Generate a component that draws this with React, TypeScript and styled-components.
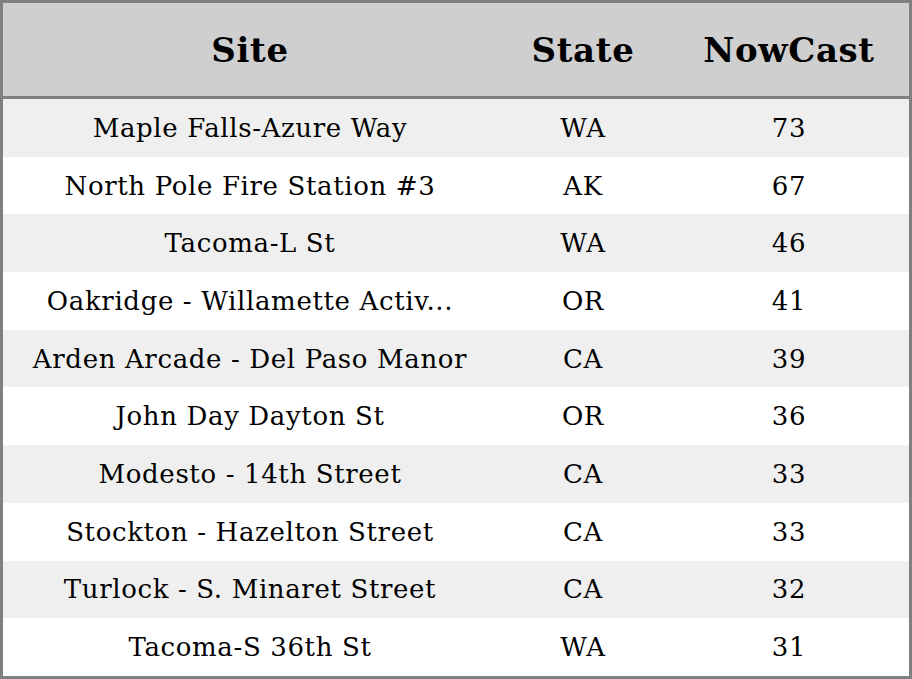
import React from 'react'
import styled, { createGlobalStyle } from 'styled-components'

const GlobalStyle = createGlobalStyle`
  html, body {
    margin: 0;
    padding: 0;
    background: #ffffff;
  }
`

const Table = styled.table`
  width: 912px;
  height: 679px;
  border: 3px solid #808080;
  border-spacing: 0;
  box-sizing: border-box;
  table-layout: fixed;
  font-family: "DejaVu Serif", serif;
  letter-spacing: 0.04em;
  color: #000;
`

const HeadCell = styled.th<{ $width: number }>`
  width: ${(p) => p.$width}px;
  height: 93px;
  padding: 0;
  background: #cfcfcf;
  border-bottom: 3px solid #808080;
  font-size: 34px;
  font-weight: bold;
  text-align: center;
  vertical-align: middle;
`

const Row = styled.tr<{ $striped: boolean }>`
  background: ${(p) => (p.$striped ? '#efefef' : '#ffffff')};
`

const Cell = styled.td`
  height: 57.7px;
  padding: 0;
  font-size: 26px;
  text-align: center;
  vertical-align: middle;
  white-space: nowrap;
`

const sites = [
  { site: 'Maple Falls-Azure Way', state: 'WA', nowcast: 73 },
  { site: 'North Pole Fire Station #3', state: 'AK', nowcast: 67 },
  { site: 'Tacoma-L St', state: 'WA', nowcast: 46 },
  { site: 'Oakridge - Willamette Activ...', state: 'OR', nowcast: 41 },
  { site: 'Arden Arcade - Del Paso Manor', state: 'CA', nowcast: 39 },
  { site: 'John Day Dayton St', state: 'OR', nowcast: 36 },
  { site: 'Modesto - 14th Street', state: 'CA', nowcast: 33 },
  { site: 'Stockton - Hazelton Street', state: 'CA', nowcast: 33 },
  { site: 'Turlock - S. Minaret Street', state: 'CA', nowcast: 32 },
  { site: 'Tacoma-S 36th St', state: 'WA', nowcast: 31 },
]

const App: React.FC = () => {
  return (
    <>
      <GlobalStyle />
      <Table>
        <thead>
          <tr>
            <HeadCell $width={494}>Site</HeadCell>
            <HeadCell $width={172}>State</HeadCell>
            <HeadCell $width={240}>NowCast</HeadCell>
          </tr>
        </thead>
        <tbody>
          {sites.map((s, i) => (
            <Row key={s.site} $striped={i % 2 === 0}>
              <Cell>{s.site}</Cell>
              <Cell>{s.state}</Cell>
              <Cell>{s.nowcast}</Cell>
            </Row>
          ))}
        </tbody>
      </Table>
    </>
  )
}

export default App
